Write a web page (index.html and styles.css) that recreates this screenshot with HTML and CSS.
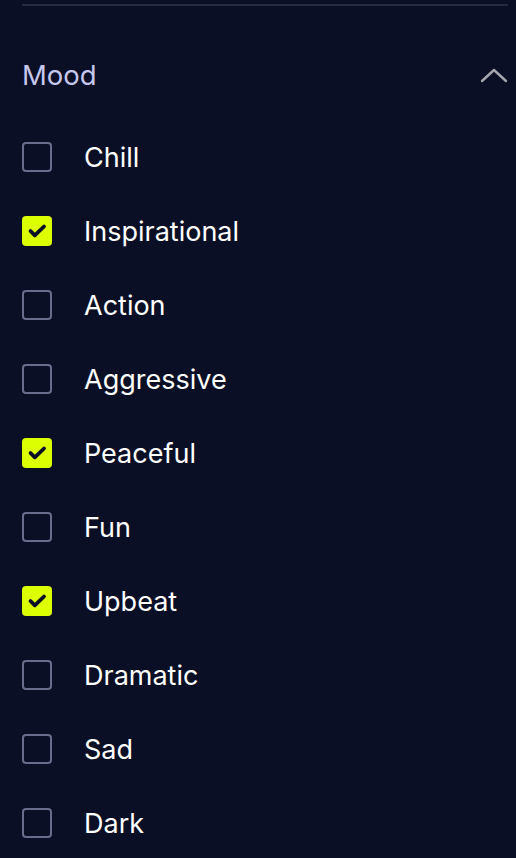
FILE: index.html
```html
<!DOCTYPE html>
<html lang="en">
<head>
  <meta charset="UTF-8">
  <title>Mood filter</title>
  <link rel="stylesheet" href="styles.css">
</head>
<body>

  <div class="panel">
    <hr class="divider">

    <div class="filter-header">
      <span class="filter-title">Mood</span>
      <svg class="chevron" width="28" height="16" viewBox="0 0 28 16">
        <path d="M2 14 L14 3 L26 14" fill="none" stroke="#a6a7ae" stroke-width="2.4" stroke-linecap="round" stroke-linejoin="round"/>
      </svg>
    </div>

    <ul class="options">
      <li class="option"><span class="box"></span>Chill</li>
      <li class="option checked"><span class="box"><svg viewBox="0 0 30 30"><path d="M8.5 15 L12.8 19.3 L22 10.5" fill="none" stroke="#0b0f25" stroke-width="3.8" stroke-linecap="round" stroke-linejoin="round"/></svg></span>Inspirational</li>
      <li class="option"><span class="box"></span>Action</li>
      <li class="option"><span class="box"></span>Aggressive</li>
      <li class="option checked"><span class="box"><svg viewBox="0 0 30 30"><path d="M8.5 15 L12.8 19.3 L22 10.5" fill="none" stroke="#0b0f25" stroke-width="3.8" stroke-linecap="round" stroke-linejoin="round"/></svg></span>Peaceful</li>
      <li class="option"><span class="box"></span>Fun</li>
      <li class="option checked"><span class="box"><svg viewBox="0 0 30 30"><path d="M8.5 15 L12.8 19.3 L22 10.5" fill="none" stroke="#0b0f25" stroke-width="3.8" stroke-linecap="round" stroke-linejoin="round"/></svg></span>Upbeat</li>
      <li class="option"><span class="box"></span>Dramatic</li>
      <li class="option"><span class="box"></span>Sad</li>
      <li class="option"><span class="box"></span>Dark</li>
    </ul>
  </div>

</body>
</html>
```

FILE: styles.css
```css
body {
  margin: 0;
  padding: 0;
  background-color: #0b0f25;
  font-family: Inter, 'Noto Sans', sans-serif;
  overflow: hidden;
}

.panel {
  padding: 0 8px 0 22px;
}

.divider {
  margin: 4px 0 0;
  height: 2px;
  border: none;
  background-color: #262a3e;
}

.filter-header {
  display: flex;
  align-items: center;
  justify-content: space-between;
  height: 60px;
  margin-top: 39px;
}

.filter-title {
  font-size: 27.5px;
  color: #c5c7ed;
}

.options {
  list-style: none;
  margin: 15px 0 0;
  padding: 0;
}

.option {
  display: flex;
  align-items: center;
  height: 74px;
  font-size: 27px;
  color: #ffffff;
}

.box {
  box-sizing: border-box;
  width: 30px;
  height: 30px;
  margin-right: 32px;
  border: 2px solid #6a6c8b;
  border-radius: 4px;
  flex-shrink: 0;
}

.box svg {
  display: block;
  width: 30px;
  height: 30px;
}

.checked .box {
  border: none;
  background-color: #dcff02;
}
```
